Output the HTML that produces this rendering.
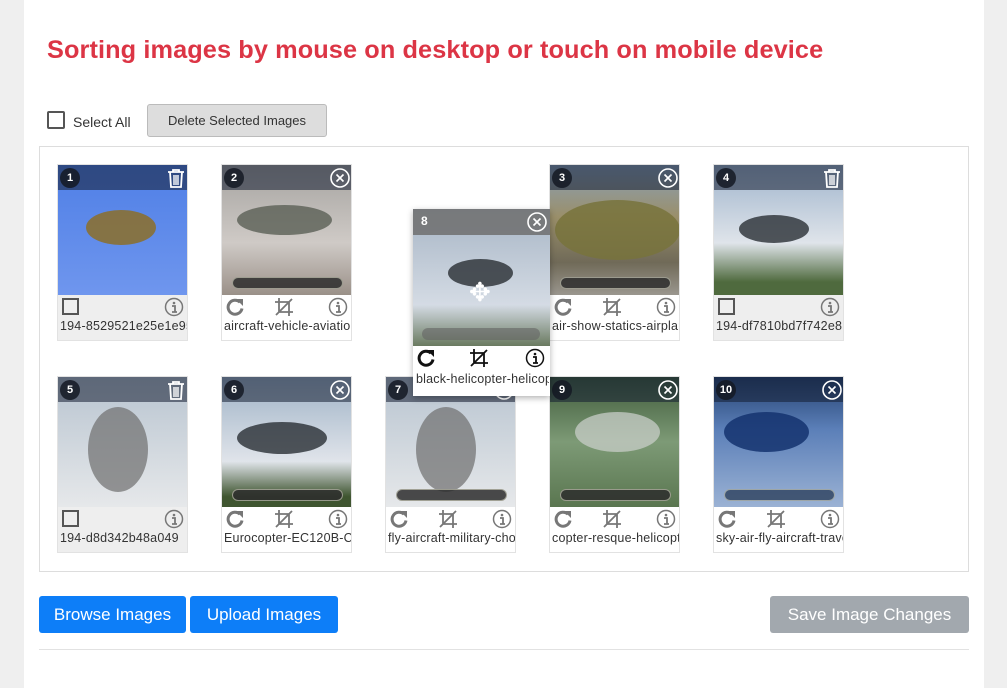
<!DOCTYPE html>
<html><head><meta charset="utf-8"><style>
*{box-sizing:border-box;margin:0;padding:0}
body{width:1007px;height:688px;background:#efefef;font-family:"Liberation Sans",sans-serif;position:relative;overflow:hidden}
.panel{position:absolute;left:24px;top:0;width:960px;height:688px;background:#fff}
h1{position:absolute;left:47px;top:36px;font-size:25.3px;color:#dc3545;font-weight:bold;letter-spacing:0.1px}
.sa{position:absolute;left:47px;top:111px;width:18px;height:18px;border:2px solid #555;border-radius:2px}
.salbl{position:absolute;left:73px;top:114px;font-size:14px;color:#333}
.del{position:absolute;left:147px;top:104px;width:180px;height:33px;background:#ddd;border:1px solid #bbb;border-radius:3px;font-size:13px;color:#333;text-align:center;line-height:31px}
.box{position:absolute;left:39px;top:146px;width:930px;height:426px;border:1px solid #ddd}
.card{position:absolute;width:131px;height:177px;border:1px solid #e2e2e2;background:#fff;overflow:hidden}
.card.g{background:#eee}
.img{position:absolute;left:0;top:0;width:131px;height:130px;overflow:hidden}
.hdr{position:absolute;left:0;top:0;width:100%;height:25px;background:rgba(20,30,50,.55)}
.num{position:absolute;left:2px;top:3px;width:20px;height:20px;border-radius:50%;background:rgba(20,25,35,.85);color:#fff;font-size:11px;font-weight:bold;text-align:center;line-height:20px}
.tr{position:absolute;right:2px;top:2px;width:22px;height:22px}
.bar{position:absolute;left:10px;top:112px;width:111px;height:12px;border-radius:6px;background:rgba(45,45,45,.85);border:1px solid rgba(220,220,200,.6)}
.ic{position:absolute;top:132px;width:20px;height:20px;color:#777}
.fn{position:absolute;left:2px;top:154px;width:127px;font-size:12.5px;color:#333;white-space:nowrap;overflow:hidden;letter-spacing:0.2px}
.cb{position:absolute;left:4px;top:133px;width:17px;height:17px;border:2px solid #555}
.heli{position:absolute;border-radius:50%;background:rgba(30,35,40,.75)}
.btn{position:absolute;top:596px;height:37px;border-radius:3px;color:#fff;font-size:17px;text-align:center;line-height:37px}
</style></head><body>
<svg width="0" height="0" style="position:absolute">
<symbol id="x" viewBox="0 0 22 22"><circle cx="11" cy="11" r="9" fill="none" stroke="#fff" stroke-width="1.6"/><path d="M7.5 7.5l7 7M14.5 7.5l-7 7" stroke="#fff" stroke-width="1.6"/></symbol>
<symbol id="t" viewBox="0 0 22 22"><path d="M3 5h16M8 5V3h6v2M5 5l1 15h10l1-15" fill="none" stroke="#fff" stroke-width="1.8"/><path d="M9 8v10M11 8v10M13 8v10" stroke="#fff" stroke-width="1.4"/></symbol>
<symbol id="r" viewBox="0 0 20 20"><path d="M15 5.2A7 7 0 1 0 17 11.5" fill="none" stroke="currentColor" stroke-width="3"/><path d="M11 2h7v7z" fill="currentColor"/></symbol>
<symbol id="c" viewBox="0 0 20 20"><path d="M5 1v14h14M1 5h14v14M2 18L18 2" fill="none" stroke="currentColor" stroke-width="1.8"/></symbol>
<symbol id="i" viewBox="0 0 20 20"><circle cx="10" cy="10" r="8.5" fill="none" stroke="currentColor" stroke-width="1.5"/><circle cx="10" cy="6" r="1.3" fill="currentColor"/><path d="M8 9h3v6M8 15h5" fill="none" stroke="currentColor" stroke-width="1.8"/></symbol>
</svg>
<div class="panel"></div>
<h1>Sorting images by mouse on desktop or touch on mobile device</h1>
<div class="sa"></div><div class="salbl">Select All</div>
<div class="del">Delete Selected Images</div>
<div class="box"></div>

<div class="card g" style="left:57px;top:164px"><div class="img" style="background:linear-gradient(#4f7fe6,#6f96ee)"><div class="heli" style="left:28px;top:45px;width:70px;height:35px;background:rgba(140,110,40,.85)"></div><div class="hdr"></div><div class="num">1</div><svg class="tr"><use href="#t"/></svg></div><div class="cb"></div><svg class="ic" style="left:106px"><use href="#i"/></svg><div class="fn">194-8529521e25e1e95</div></div>

<div class="card" style="left:221px;top:164px"><div class="img" style="background:linear-gradient(#a5a3a0,#cfcac6 60%,#9a9088)"><div class="heli" style="left:15px;top:40px;width:95px;height:30px;background:rgba(90,95,85,.8)"></div><div class="hdr"></div><div class="num">2</div><svg class="tr"><use href="#x"/></svg><div class="bar"></div></div><svg class="ic" style="left:3px"><use href="#r"/></svg><svg class="ic" style="left:52px"><use href="#c"/></svg><svg class="ic" style="left:106px"><use href="#i"/></svg><div class="fn">aircraft-vehicle-aviation</div></div>

<div class="card" style="left:549px;top:164px"><div class="img" style="background:linear-gradient(#8aa0b8,#9a8f6a 40%,#706a58 75%,#9a968e)"><div class="heli" style="left:5px;top:35px;width:125px;height:60px;background:rgba(120,115,60,.85)"></div><div class="hdr"></div><div class="num">3</div><svg class="tr"><use href="#x"/></svg><div class="bar"></div></div><svg class="ic" style="left:3px"><use href="#r"/></svg><svg class="ic" style="left:52px"><use href="#c"/></svg><svg class="ic" style="left:106px"><use href="#i"/></svg><div class="fn">air-show-statics-airplane</div></div>

<div class="card g" style="left:713px;top:164px"><div class="img" style="background:linear-gradient(#9fb4cc,#dfe4ea 60%,#4f6a3e 90%)"><div class="heli" style="left:25px;top:50px;width:70px;height:28px"></div><div class="hdr"></div><div class="num">4</div><svg class="tr"><use href="#t"/></svg></div><div class="cb"></div><svg class="ic" style="left:106px"><use href="#i"/></svg><div class="fn">194-df7810bd7f742e8</div></div>

<div class="card g" style="left:57px;top:376px"><div class="img" style="background:linear-gradient(#b8c4d0,#e6e8ea)"><div class="heli" style="left:30px;top:30px;width:60px;height:85px;background:rgba(110,110,110,.7)"></div><div class="hdr"></div><div class="num">5</div><svg class="tr"><use href="#t"/></svg></div><div class="cb"></div><svg class="ic" style="left:106px"><use href="#i"/></svg><div class="fn">194-d8d342b48a049</div></div>

<div class="card" style="left:221px;top:376px"><div class="img" style="background:linear-gradient(#9eb2c6,#e0e4ea 65%,#3f5530 92%)"><div class="heli" style="left:15px;top:45px;width:90px;height:32px"></div><div class="hdr"></div><div class="num">6</div><svg class="tr"><use href="#x"/></svg><div class="bar"></div></div><svg class="ic" style="left:3px"><use href="#r"/></svg><svg class="ic" style="left:52px"><use href="#c"/></svg><svg class="ic" style="left:106px"><use href="#i"/></svg><div class="fn">Eurocopter-EC120B-Colibri</div></div>

<div class="card" style="left:385px;top:376px"><div class="img" style="background:linear-gradient(#b8c4d0,#e6e8ea)"><div class="heli" style="left:30px;top:30px;width:60px;height:85px;background:rgba(110,110,110,.7)"></div><div class="hdr"></div><div class="num">7</div><svg class="tr"><use href="#x"/></svg><div class="bar"></div></div><svg class="ic" style="left:3px"><use href="#r"/></svg><svg class="ic" style="left:52px"><use href="#c"/></svg><svg class="ic" style="left:106px"><use href="#i"/></svg><div class="fn">fly-aircraft-military-chopper</div></div>

<div class="card" style="left:549px;top:376px"><div class="img" style="background:linear-gradient(#3e5a3a,#7d9a76 50%,#5a7650)"><div class="heli" style="left:25px;top:35px;width:85px;height:40px;background:rgba(200,205,200,.75)"></div><div class="hdr"></div><div class="num">9</div><svg class="tr"><use href="#x"/></svg><div class="bar"></div></div><svg class="ic" style="left:3px"><use href="#r"/></svg><svg class="ic" style="left:52px"><use href="#c"/></svg><svg class="ic" style="left:106px"><use href="#i"/></svg><div class="fn">copter-resque-helicopter</div></div>

<div class="card" style="left:713px;top:376px"><div class="img" style="background:linear-gradient(#23406e,#5b7fb8 40%,#9bb2d4)"><div class="heli" style="left:10px;top:35px;width:85px;height:40px;background:rgba(20,50,110,.85)"></div><div class="hdr"></div><div class="num">10</div><svg class="tr"><use href="#x"/></svg><div class="bar" style="background:rgba(50,70,100,.85)"></div></div><svg class="ic" style="left:3px"><use href="#r"/></svg><svg class="ic" style="left:52px"><use href="#c"/></svg><svg class="ic" style="left:106px"><use href="#i"/></svg><div class="fn">sky-air-fly-aircraft-travel</div></div>

<div class="card" style="left:413px;top:209px;width:137px;height:187px;border:none;box-shadow:0 2px 6px rgba(0,0,0,.3)"><div class="img" style="width:137px;height:137px;background:linear-gradient(#a8b6c6,#d4dbe4 70%,#6a7a60)"><div class="heli" style="left:35px;top:50px;width:65px;height:28px;background:rgba(40,45,50,.8)"></div><div class="hdr" style="height:26px;background:rgba(110,110,110,.85)"></div><div style="position:absolute;left:8px;top:5px;color:#fff;font-size:12px;font-weight:bold">8</div><svg class="tr"><use href="#x"/></svg><div style="position:absolute;left:9px;top:119px;width:118px;height:12px;border-radius:6px;background:rgba(100,100,100,.6)"></div><div style="position:absolute;left:56px;top:70px;color:#fff;font-size:26px;line-height:26px">✥</div></div><svg class="ic" style="left:3px;top:139px;color:#111"><use href="#r"/></svg><svg class="ic" style="left:56px;top:139px;color:#111"><use href="#c"/></svg><svg class="ic" style="left:112px;top:139px;color:#111"><use href="#i"/></svg><div class="fn" style="top:163px;left:3px;width:133px">black-helicopter-helicopter</div></div>

<div class="btn" style="left:39px;width:147px;background:#0d7ef8">Browse Images</div>
<div class="btn" style="left:190px;width:148px;background:#0d7ef8">Upload Images</div>
<div class="btn" style="left:770px;width:199px;background:#a2a8ae">Save Image Changes</div>
<div style="position:absolute;left:39px;top:649px;width:930px;height:1px;background:#e2e2e2"></div>
</body></html>
